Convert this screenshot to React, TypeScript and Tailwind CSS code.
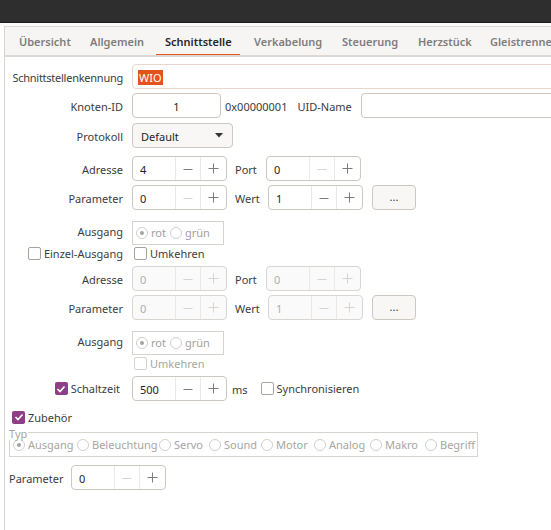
import React from "react";

const F = { fontFamily: '"Noto Sans", "DejaVu Sans", sans-serif' };

function Minus({ c }: { c: string }) {
  return (
    <svg width="10" height="10" viewBox="0 0 10 10">
      <line x1="0.5" y1="5.5" x2="9.5" y2="5.5" stroke={c} strokeWidth="1" />
    </svg>
  );
}
function Plus({ c }: { c: string }) {
  return (
    <svg width="11" height="11" viewBox="0 0 11 11">
      <line x1="0.5" y1="5.5" x2="10.5" y2="5.5" stroke={c} strokeWidth="1" />
      <line x1="5.5" y1="0.5" x2="5.5" y2="10.5" stroke={c} strokeWidth="1" />
    </svg>
  );
}

function Spin({
  value,
  disabled,
  minusDim,
}: {
  value: string;
  disabled?: boolean;
  minusDim?: boolean;
}) {
  const on = "#7c7c7c";
  const off = "#d6d3d0";
  return (
    <div
      className={`flex h-[25px] w-[95px] shrink-0 rounded-[4px] border ${
        disabled ? "border-[#d9d5d1] bg-[#fafafa]" : "border-[#cdc7c2] bg-white"
      }`}
    >
      <div
        className={`flex w-[42px] items-center pl-[7px] pt-[3px] text-[11px] ${
          disabled ? "text-[#b0aeac]" : "text-[#1e1e1e]"
        }`}
      >
        {value}
      </div>
      <div className="flex w-[26px] items-center justify-center border-l border-[#ebe8e5]">
        <Minus c={disabled || minusDim ? off : on} />
      </div>
      <div className="flex w-[26px] items-center justify-center border-l border-[#ebe8e5]">
        <Plus c={disabled ? off : on} />
      </div>
    </div>
  );
}

function Check({ checked, disabled }: { checked?: boolean; disabled?: boolean }) {
  if (checked)
    return (
      <div className="flex h-[13px] w-[13px] shrink-0 items-center justify-center rounded-[2px] bg-[#8f3f86]">
        <svg width="10" height="10" viewBox="0 0 10 10">
          <path d="M1.5 5 L4 7.5 L8.5 2.5" fill="none" stroke="white" strokeWidth="1.6" />
        </svg>
      </div>
    );
  return (
    <div
      className={`h-[13px] w-[13px] shrink-0 rounded-[2px] border bg-white ${
        disabled ? "border-[#d6d2ce]" : "border-[#a9a39e]"
      }`}
    />
  );
}

function Radio({ checked }: { checked?: boolean }) {
  return (
    <div className="flex h-[12px] w-[12px] shrink-0 items-center justify-center rounded-full border border-[#d2cecb] bg-white">
      {checked && <div className="h-[4px] w-[4px] rounded-full bg-[#a6a29f]" />}
    </div>
  );
}

function Label({ children, top }: { children: React.ReactNode; top?: boolean }) {
  return (
    <div
      className={`flex w-[118px] shrink-0 justify-end whitespace-nowrap text-[11px] text-[#3c3c3c] ${
        top ? "self-start pt-[3px]" : "pt-[3px]"
      }`}
    >
      {children}
    </div>
  );
}

function RotGruen() {
  return (
    <div className="flex h-[24px] w-[92px] shrink-0 items-end border border-[#d6d2ce] pb-[3px] pl-[3px] text-[11px] text-[#a3a09d]">
      <div className="flex items-center">
        <Radio checked />
        <span className="ml-[3px]">rot</span>
        <span className="ml-[4px]" />
        <Radio />
        <span className="ml-[3px]">grün</span>
      </div>
    </div>
  );
}

function Btn() {
  return (
    <div className="flex h-[25px] w-[44px] shrink-0 items-center justify-center rounded-[4px] border border-[#cdc7c2] bg-[#f8f7f6] pb-[1px] text-[11px] text-[#3c3c3c]">
      ...
    </div>
  );
}

const tabs: [string, number][] = [
  ["Übersicht", 71],
  ["Allgemein", 75],
  ["Schnittstelle", 89],
  ["Verkabelung", 88],
  ["Steuerung", 76],
  ["Herzstück", 72],
  ["Gleistrenner", 120],
];

const typItems: [string, number, boolean][] = [
  ["Ausgang", 64, true],
  ["Beleuchtung", 82, false],
  ["Servo", 50, false],
  ["Sound", 52, false],
  ["Motor", 53, false],
  ["Analog", 56, false],
  ["Makro", 55, false],
  ["Begriff", 52, false],
];

const txt = "pt-[3px] text-[11px] text-[#3c3c3c] whitespace-nowrap";

export default function App() {
  return (
    <div className="h-[530px] w-[551px] overflow-hidden bg-white" style={F}>
      <div className="h-[23px] border-b border-[#1c1c1c] bg-[#2e2e2e]" />
      <div className="h-[3px] bg-[#fafafa]" />
      <div className="ml-[4px] h-[504px] border-l border-[#d8d4d0]">
        {/* tab bar */}
        <div className="flex h-[31px] overflow-hidden border-b-[2px] border-t border-[#dcd8d4] bg-[#f6f5f4] pl-[5px]">
          {tabs.map(([t, w], i) => (
            <div key={t} className="relative flex h-full shrink-0" style={{ width: w }}>
              <div
                className={`flex h-full items-center px-[9px] pt-[3px] text-[11px] font-semibold ${
                  i === 2 ? "text-[#262626]" : "text-[#7d7d7d]"
                }`}
              >
                <span className="whitespace-nowrap">{t}</span>
              </div>
              {i === 2 && (
                <div className="absolute bottom-[-2px] left-0 h-[3px] w-[84px] bg-[#e95420]" />
              )}
            </div>
          ))}
        </div>

        <div className="flex flex-col">
          {/* row 1 */}
          <div className="mt-[7px] flex h-[25px] items-center">
            <div className="flex w-[118px] shrink-0 justify-end whitespace-nowrap pt-[3px] text-[11px] tracking-[-0.25px] text-[#3c3c3c]">
              Schnittstellenkennung
            </div>
            <div className="ml-[9px] flex h-[25px] w-[460px] shrink-0 items-center rounded-[4px] border border-[#e6d6cc] bg-white pl-[5px] pt-[1px] text-[11px]">
              <span className="bg-[#e4521d] px-[1px] pt-[1px] leading-[14px] text-white">WIO</span>
            </div>
          </div>
          {/* row 2 */}
          <div className="mt-[4px] flex h-[25px] items-center">
            <Label>Knoten-ID</Label>
            <div className="ml-[9px] flex h-[25px] w-[89px] shrink-0 items-center justify-center rounded-[4px] border border-[#cdc7c2] bg-white pt-[3px] text-[11px] text-[#1e1e1e]">
              1
            </div>
            <span className={`ml-[4px] ${txt}`}>0x00000001</span>
            <span className={`ml-[10px] ${txt}`}>UID-Name</span>
            <div className="ml-[9px] h-[25px] w-[250px] shrink-0 rounded-[4px] border border-[#cdc7c2] bg-white" />
          </div>
          {/* row 3 */}
          <div className="mt-[5px] flex h-[25px] items-center">
            <Label>Protokoll</Label>
            <div className="ml-[9px] flex h-[25px] w-[101px] shrink-0 items-center justify-between rounded-[4px] border border-[#cdc7c2] bg-[#f8f7f6] pl-[8px] pr-[9px] text-[11px] text-[#1e1e1e]">
              <span className="pt-[3px]">Default</span>
              <svg width="8" height="5" viewBox="0 0 8 5">
                <path d="M0 0 L8 0 L4 4.5 Z" fill="#333" />
              </svg>
            </div>
          </div>
          {/* row 4 */}
          <div className="mt-[8px] flex h-[25px] items-center">
            <Label>Adresse</Label>
            <div className="ml-[9px]">
              <Spin value="4" />
            </div>
            <span className={`ml-[8px] w-[31px] ${txt}`}>Port</span>
            <Spin value="0" minusDim />
          </div>
          {/* row 5 */}
          <div className="mt-[4px] flex h-[25px] items-center">
            <Label>Parameter</Label>
            <div className="ml-[9px]">
              <Spin value="0" minusDim />
            </div>
            <span className={`ml-[8px] w-[33px] ${txt}`}>Wert</span>
            <Spin value="1" />
            <div className="ml-[9px]">
              <Btn />
            </div>
          </div>
          {/* row 6 */}
          <div className="mt-[11px] flex h-[24px] items-center">
            <Label top>Ausgang</Label>
            <div className="ml-[9px]">
              <RotGruen />
            </div>
          </div>
          {/* row 7 */}
          <div className="mt-[1px] flex h-[14px] items-center">
            <div className="flex w-[118px] shrink-0 items-center justify-end whitespace-nowrap text-[11px] text-[#3c3c3c]">
              <Check />
              <span className="ml-[3px] pt-[2px]">Einzel-Ausgang</span>
            </div>
            <div className="ml-[11px] flex items-center text-[11px] text-[#3c3c3c]">
              <Check />
              <span className="ml-[3px] pt-[2px]">Umkehren</span>
            </div>
          </div>
          {/* row 8 */}
          <div className="mt-[6px] flex h-[25px] items-center">
            <Label>Adresse</Label>
            <div className="ml-[9px]">
              <Spin value="0" disabled />
            </div>
            <span className={`ml-[8px] w-[31px] ${txt}`}>Port</span>
            <Spin value="0" disabled />
          </div>
          {/* row 9 */}
          <div className="mt-[4px] flex h-[25px] items-center">
            <Label>Parameter</Label>
            <div className="ml-[9px]">
              <Spin value="0" disabled />
            </div>
            <span className={`ml-[8px] w-[33px] ${txt}`}>Wert</span>
            <Spin value="1" disabled />
            <div className="ml-[9px]">
              <Btn />
            </div>
          </div>
          {/* row 10 */}
          <div className="mt-[11px] flex h-[24px] items-center">
            <Label top>Ausgang</Label>
            <div className="ml-[9px]">
              <RotGruen />
            </div>
          </div>
          {/* row 11 */}
          <div className="mt-[1px] flex h-[14px] items-center">
            <div className="ml-[129px] flex items-center text-[11px] text-[#a8a5a2]">
              <Check disabled />
              <span className="ml-[3px] pt-[2px]">Umkehren</span>
            </div>
          </div>
          {/* row 12 */}
          <div className="mt-[6px] flex h-[25px] items-center">
            <div className="flex w-[115px] shrink-0 items-center justify-end whitespace-nowrap text-[11px] text-[#3c3c3c]">
              <Check checked />
              <span className="ml-[3px] pt-[2px]">Schaltzeit</span>
            </div>
            <div className="ml-[12px]">
              <Spin value="500" />
            </div>
            <span className={`ml-[5px] ${txt}`}>ms</span>
            <div className="ml-[13px] flex items-center text-[11px] text-[#3c3c3c]">
              <Check />
              <span className="ml-[3px] pt-[2px]">Synchronisieren</span>
            </div>
          </div>
          {/* row 13 */}
          <div className="mt-[9px] flex h-[14px] items-center pl-[7px] text-[11px] text-[#3c3c3c]">
            <Check checked />
            <span className="ml-[3px] pt-[2px]">Zubehör</span>
          </div>
          {/* Typ frame */}
          <div className="relative ml-[4px] mt-[8px] h-[25px] w-[469px] border border-[#d8d4d0]">
            <span className="absolute -top-[6px] left-[-1px] bg-white pr-[1px] text-[11px] leading-[13px] text-[#a8a5a2]">
              Typ
            </span>
            <div className="flex h-full items-center pl-[3px] text-[11px] text-[#a8a5a2]">
              {typItems.map(([t, w, c]) => (
                <div key={t} className="flex shrink-0 items-center" style={{ width: w }}>
                  <Radio checked={c} />
                  <span className="ml-[3px] whitespace-nowrap pt-[2px]">{t}</span>
                </div>
              ))}
            </div>
          </div>
          {/* last row */}
          <div className="mt-[8px] flex h-[25px] items-center pl-[4px]">
            <span className={`w-[62px] ${txt}`}>Parameter</span>
            <Spin value="0" minusDim />
          </div>
        </div>
      </div>
    </div>
  );
}
